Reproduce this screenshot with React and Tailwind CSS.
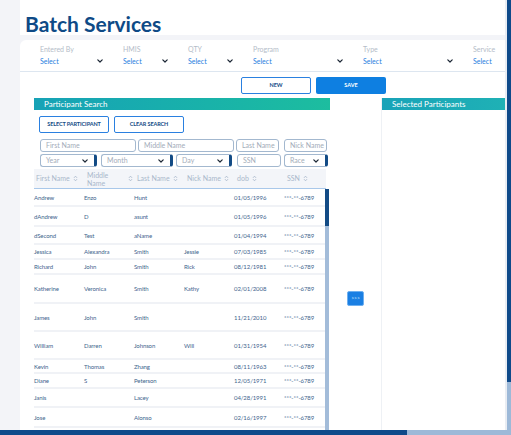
import React from 'react';

const filters = [
    { label: 'Entered By', w: 'w-[63px]' },
    { label: 'HMIS', w: 'w-[45px]' },
    { label: 'QTY', w: 'w-[45px]' },
    { label: 'Program', w: 'w-[90px]' },
    { label: 'Type', w: 'w-[90px]' },
    { label: 'Service', w: 'w-[90px]' },
];

const rows = [
    { first: 'Andrew', middle: 'Enzo', last: 'Hunt', nick: '', dob: '01/05/1996', h: 'h-[18px]' },
    { first: 'dAndrew', middle: 'D', last: 'asunt', nick: '', dob: '01/05/1996', h: 'h-[20px]' },
    { first: 'dSecond', middle: 'Test', last: 'aName', nick: '', dob: '01/04/1994', h: 'h-[18px]' },
    { first: 'Jessica', middle: 'Alexandra', last: 'Smith', nick: 'Jessie', dob: '07/03/1985', h: 'h-[15px]' },
    { first: 'Richard', middle: 'John', last: 'Smith', nick: 'Rick', dob: '08/12/1981', h: 'h-[15px]' },
    { first: 'Katherine', middle: 'Veronica', last: 'Smith', nick: 'Kathy', dob: '02/01/2008', h: 'h-[29px]' },
    { first: 'James', middle: 'John', last: 'Smith', nick: '', dob: '11/21/2010', h: 'h-[28px]' },
    { first: 'William', middle: 'Darren', last: 'Johnson', nick: 'Will', dob: '01/31/1954', h: 'h-[28px]' },
    { first: 'Kevin', middle: 'Thomas', last: 'Zhang', nick: '', dob: '08/11/1963', h: 'h-[14px]' },
    { first: 'Diane', middle: 'S', last: 'Peterson', nick: '', dob: '12/05/1971', h: 'h-[15px]' },
    { first: 'Janis', middle: '', last: 'Lacey', nick: '', dob: '04/28/1991', h: 'h-[19px]' },
    { first: 'Jose', middle: '', last: 'Alonso', nick: '', dob: '02/16/1997', h: 'h-[20px]' },
];

const Chevron = ({ color = '#1d2836' }) => (
    <svg width="6" height="4" viewBox="0 0 6 4" className="shrink-0">
        <path d="M0.8 0.8 L3 3 L5.2 0.8" fill="none" stroke={color} strokeWidth="1.2" strokeLinecap="round" strokeLinejoin="round" />
    </svg>
);

const Sort = () => (
    <svg width="5" height="7" viewBox="0 0 5 7" className="shrink-0">
        <path d="M1 2.8 L2.5 1.2 L4 2.8" fill="none" stroke="#a9b8cb" strokeWidth="0.9" />
        <path d="M1 4.2 L2.5 5.8 L4 4.2" fill="none" stroke="#a9b8cb" strokeWidth="0.9" />
    </svg>
);

const TextBox = ({ placeholder, w }) => (
    <div className={`${w} h-[13px] border border-[#a3b8cf] rounded-[3px] flex items-center pl-[5px] text-[7px] text-[#a3acb9]`}>
        {placeholder}
    </div>
);

const SelectBox = ({ placeholder, w }) => (
    <div className={`${w} h-[13px] border border-[#a3b8cf] border-r-[3px] border-r-[#134b85] rounded-[3px] flex items-center justify-between pl-[5px] pr-[6px] text-[7px] text-[#a3acb9]`}>
        <span>{placeholder}</span>
        <Chevron />
    </div>
);

const HeadCell = ({ label, pl = 'pl-[3px]' }) => (
    <div className={`${pl} flex items-center gap-[3px] text-[7px] text-[#a9b8cb]`}>
        <span>{label}</span>
        <Sort />
    </div>
);

const App = () => {
    return (
        <div className="relative w-[511px] h-[435px] overflow-hidden bg-white flex font-['Lato',sans-serif]">
            <div className="w-[20px] shrink-0 bg-[#f3f4f8]" />

            <div className="w-[485px] shrink-0 flex flex-col">
                {/* title */}
                <div className="h-[35px] pl-[5px] pt-[12px]">
                    <h1 className="text-[21px] leading-[23px] font-bold text-[#0e4a86]">Batch Services</h1>
                </div>

                {/* filters */}
                <div className="bg-[#f3f4f8] pt-[5px]">
                    <div className="h-[32px] bg-white rounded-tl-[6px] border-b border-[#dde6f0] flex gap-[20px] pl-[20px] pt-[5px] overflow-hidden">
                        {filters.map(f => (
                            <div key={f.label} className={`${f.w} shrink-0`}>
                                <div className="text-[7px] leading-[9px] text-[#b4bcc8]">{f.label}</div>
                                <div className="mt-[3px] h-[8px] flex items-center justify-between">
                                    <span className="text-[7px] leading-[8px] text-[#2a80e0]">Select</span>
                                    <Chevron />
                                </div>
                            </div>
                        ))}
                    </div>
                </div>

                {/* actions */}
                <div className="mt-[5px] pl-[221px] flex gap-[5px]">
                    <button className="w-[70px] h-[17px] border border-[#2a80e0] rounded-[2px] bg-white text-[5.5px] font-bold text-[#134b85]">NEW</button>
                    <button className="w-[70px] h-[17px] rounded-[2px] bg-[#0e7fe1] text-[5.5px] font-bold text-white">SAVE</button>
                </div>

                {/* panels */}
                <div className="mt-[4px] pl-[14px] flex flex-1">
                    {/* participant search */}
                    <div className="w-[296px] shrink-0 flex flex-col">
                        <div className="h-[12px] bg-gradient-to-r from-[#17a2b6] to-[#1dbd9f] pl-[10px] flex items-center text-[8px] text-white">
                            Participant Search
                        </div>
                        <div className="mt-[6px] pl-[5px] flex gap-[5px]">
                            <button className="w-[70px] h-[17px] border border-[#2a80e0] rounded-[2px] bg-white text-[5.5px] tracking-[-0.1px] font-bold text-[#134b85]">SELECT PARTICIPANT</button>
                            <button className="w-[70px] h-[17px] border border-[#2a80e0] rounded-[2px] bg-white text-[5.5px] tracking-[-0.1px] font-bold text-[#134b85]">CLEAR SEARCH</button>
                        </div>
                        <div className="mt-[6px] pl-[6px] flex gap-[2px]">
                            <TextBox placeholder="First Name" w="w-[96px]" />
                            <TextBox placeholder="Middle Name" w="w-[96px]" />
                            <TextBox placeholder="Last Name" w="w-[43px]" />
                            <div className="w-[1px]" />
                            <TextBox placeholder="Nick Name" w="w-[43px]" />
                        </div>
                        <div className="mt-[2px] pl-[6px] flex">
                            <SelectBox placeholder="Year" w="w-[57px]" />
                            <div className="w-[4px]" />
                            <SelectBox placeholder="Month" w="w-[72px]" />
                            <div className="w-[3px]" />
                            <SelectBox placeholder="Day" w="w-[56px]" />
                            <div className="w-[5px]" />
                            <TextBox placeholder="SSN" w="w-[44px]" />
                            <div className="w-[3px]" />
                            <SelectBox placeholder="Race" w="w-[44px]" />
                        </div>

                        {/* table */}
                        <div className="mt-[2px] w-[292px] h-[20px] bg-[#f3f5f9] border-b border-[#a9c8ea] grid grid-cols-[50px_50px_50px_50px_50px_42px]">
                            <HeadCell label="First Name" pl="pl-[2px]" />
                            <div className="pl-[3px] flex items-center text-[7px] leading-[8px] text-[#a9b8cb]">
                                <span className="w-[41px]">Middle<br />Name</span>
                                <Sort />
                            </div>
                            <HeadCell label="Last Name" />
                            <HeadCell label="Nick Name" />
                            <HeadCell label="dob" />
                            <HeadCell label="SSN" />
                        </div>
                        <div className="flex flex-1">
                            <div className="w-[291px]">
                                {rows.map((r, i) => (
                                    <div key={i} className={`${r.h} border-b-2 border-[#f0f2f6] grid grid-cols-[50px_50px_50px_50px_50px_41px] items-center text-[6px] tracking-[-0.1px] text-[#41648d]`}>
                                        <span>{r.first}</span>
                                        <span>{r.middle}</span>
                                        <span>{r.last}</span>
                                        <span>{r.nick}</span>
                                        <span>{r.dob}</span>
                                        <span>***-**-6789</span>
                                    </div>
                                ))}
                            </div>
                            <div className="w-[4px] flex flex-col">
                                <div className="h-[37px] bg-[#134b85]" />
                                <div className="flex-1 bg-[#a3bcd9]" />
                            </div>
                        </div>
                    </div>

                    {/* move */}
                    <div className="w-[51px] shrink-0 pt-[184px] pl-[17px]">
                        <button className="w-[17px] h-[15px] rounded-[2px] bg-[#1a7fe3] border border-[#6fb0f0] text-[5px] text-[#cfe4fb]">&gt;&gt;&gt;</button>
                    </div>

                    {/* selected */}
                    <div className="flex-1 border-l border-[#eef1f5] flex flex-col">
                        <div className="h-[12px] bg-gradient-to-r from-[#19a3b8] to-[#1fb1b5] pl-[10px] flex items-center text-[8px] text-white">
                            Selected Participants
                        </div>
                    </div>
                </div>
            </div>

            {/* page scrollbar */}
            <div className="w-[6px] shrink-0 flex">
                <div className="w-[2px] bg-[#e9edf3]" />
                <div className="w-[4px] flex flex-col">
                    <div className="h-[382px] bg-[#0f4a8a]" />
                    <div className="flex-1 bg-[#9db9d8]" />
                </div>
            </div>

            <div className="absolute left-0 bottom-0 w-full h-[5px] flex">
                <div className="w-[407px] bg-[#0f4a8a]" />
                <div className="flex-1 bg-[#9db9d8]" />
            </div>
        </div>
    );
};

export default App;
